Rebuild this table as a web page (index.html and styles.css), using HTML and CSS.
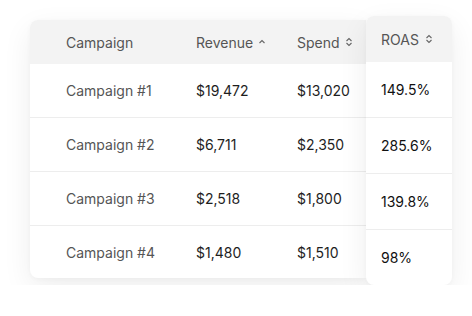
FILE: index.html
```html
<!DOCTYPE html>
<html>
<head>
<meta charset="utf-8">
<link rel="stylesheet" href="styles.css">
</head>
<body>
<div class="stage">
  <div class="card main">
    <div class="row head">
      <div class="cell name">Campaign</div>
      <div class="cell">Revenue <svg class="sort" width="8" height="10" viewBox="0 0 8 10"><path d="M1.5 6 L4 3.5 L6.5 6" fill="none" stroke="#666" stroke-width="1.1"/></svg></div>
      <div class="cell">Spend <svg class="sort" width="8" height="10" viewBox="0 0 8 10"><path d="M1.5 4 L4 1.5 L6.5 4 M1.5 6 L4 8.5 L6.5 6" fill="none" stroke="#666" stroke-width="1.1"/></svg></div>
    </div>
    <div class="row"><div class="cell name">Campaign #1</div><div class="cell">$19,472</div><div class="cell">$13,020</div></div>
    <div class="row"><div class="cell name">Campaign #2</div><div class="cell">$6,711</div><div class="cell">$2,350</div></div>
    <div class="row"><div class="cell name">Campaign #3</div><div class="cell">$2,518</div><div class="cell">$1,800</div></div>
    <div class="row last"><div class="cell name">Campaign #4</div><div class="cell">$1,480</div><div class="cell">$1,510</div></div>
  </div>
  <div class="card roas">
    <div class="rrow head">ROAS <svg class="sort" width="8" height="10" viewBox="0 0 8 10"><path d="M1.5 4 L4 1.5 L6.5 4 M1.5 6 L4 8.5 L6.5 6" fill="none" stroke="#666" stroke-width="1.1"/></svg></div>
    <div class="rrow">149.5%</div>
    <div class="rrow">285.6%</div>
    <div class="rrow">139.8%</div>
    <div class="rrow last">98%</div>
  </div>
</div>
</body>
</html>
```
FILE: styles.css
```css
html, body {
  margin: 0;
  padding: 0;
  background: #ffffff;
  font-family: Inter, "Noto Sans", sans-serif;
  font-size: 14px;
}
.stage {
  display: flex;
  align-items: flex-start;
  padding: 20px 0 0 30px;
}
.card {
  background: #fff;
  border-radius: 8px;
  overflow: hidden;
  box-shadow: 0 10px 30px rgba(0, 0, 0, 0.07), 0 1px 5px rgba(0, 0, 0, 0.03);
}
.main {
  width: 336px;
  border-radius: 8px 0 0 8px;
}
.row {
  display: grid;
  grid-template-columns: 130px 101px 69px;
  padding-left: 36px;
  height: 53px;
  align-items: center;
  border-bottom: 1px solid #ededed;
  color: #1e1e1e;
}
.row.head {
  height: 44px;
  background: #f3f3f3;
  border-bottom: none;
  color: #555;
}
.row.last {
  border-bottom: none;
  height: 52px;
}
.cell {
  display: flex;
  align-items: center;
  gap: 5px;
  white-space: nowrap;
}
.cell.name {
  color: #555;
}
.sort {
  display: block;
}
.roas {
  width: 86px;
  margin-top: -4px;
  position: relative;
  z-index: 1;
}
.rrow {
  display: flex;
  align-items: center;
  gap: 6px;
  padding-left: 15px;
  height: 55px;
  border-bottom: 1px solid #ededed;
  color: #111;
}
.rrow.head {
  height: 46px;
  background: #f3f3f3;
  border-bottom: none;
  color: #555;
}
.rrow.last {
  border-bottom: none;
}
```
